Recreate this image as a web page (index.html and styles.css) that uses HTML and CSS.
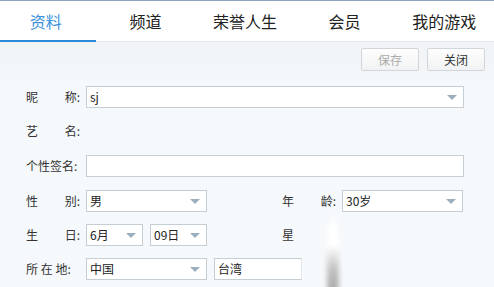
FILE: index.html
```html
<!DOCTYPE html>
<html lang="zh-CN">
<head>
<meta charset="utf-8">
<title>资料</title>
<link rel="stylesheet" href="styles.css">
</head>
<body>
<div class="page">
  <div class="topline"></div>
  <nav class="tabs">
    <div class="tab active">资料</div>
    <div class="tab">频道</div>
    <div class="tab">荣誉人生</div>
    <div class="tab">会员</div>
    <div class="tab">我的游戏</div>
  </nav>
  <div class="toolbar">
    <button class="btn disabled">保存</button>
    <button class="btn">关闭</button>
  </div>
  <div class="form">
    <div class="row r1">
      <div class="label"><span>昵</span><span>称:</span></div>
      <div class="field select wide"><span>sj</span><i class="arrow"></i></div>
    </div>
    <div class="row r2">
      <div class="label"><span>艺</span><span>名:</span></div>
    </div>
    <div class="row r3">
      <div class="label"><span>个性签名:</span></div>
      <div class="field wide"></div>
    </div>
    <div class="row r4">
      <div class="label"><span>性</span><span>别:</span></div>
      <div class="field select mid"><span>男</span><i class="arrow"></i></div>
      <div class="label second"><span>年</span><span>龄:</span></div>
      <div class="field select mid"><span>30岁</span><i class="arrow"></i></div>
    </div>
    <div class="row r5">
      <div class="label"><span>生</span><span>日:</span></div>
      <div class="field select small"><span>6月</span><i class="arrow"></i></div>
      <div class="field select small gap"><span>09日</span><i class="arrow"></i></div>
      <div class="label second"><span>星</span></div>
    </div>
    <div class="row r6">
      <div class="label"><span>所 在 地:</span></div>
      <div class="field select mid"><span>中国</span><i class="arrow"></i></div>
      <div class="field city gap"><span>台湾</span></div>
    </div>
  </div>
  <div class="blur"></div>
</div>
</body>
</html>
```

FILE: styles.css
```css
html, body {
  margin: 0;
  padding: 0;
}
body {
  width: 494px;
  height: 287px;
  overflow: hidden;
  background: #f6f9fc;
  font-family: "Noto Sans CJK SC", "Noto Sans", sans-serif;
  color: #333;
}
.page {
  position: relative;
  width: 494px;
  height: 287px;
  overflow: hidden;
}
.topline {
  height: 1px;
  background: #8ea4c2;
}
.tabs {
  display: flex;
  gap: 4px;
  height: 40px;
  background: #fff;
  border-bottom: 1px solid #e3e6ea;
}
.tab {
  width: 96px;
  box-sizing: border-box;
  padding-right: 4px;
  text-align: center;
  font-size: 16px;
  line-height: 40px;
  color: #222;
}
.tab.active {
  color: #3d90dc;
  height: 41px;
  box-sizing: border-box;
  border-bottom: 2px solid #2b8bdb;
  margin-bottom: -1px;
  line-height: 40px;
}
.toolbar {
  display: flex;
  justify-content: flex-end;
  gap: 8px;
  padding: 6px 9px 0 0;
  height: 38px;
  box-sizing: border-box;
  background: linear-gradient(#f1f4f7, #f4f7fa);
}
.btn {
  width: 58px;
  height: 23px;
  padding: 0;
  border: 1px solid #d2d6da;
  border-radius: 2px;
  background: linear-gradient(#fefefe, #f1f2f3);
  font-family: "Noto Sans CJK SC", sans-serif;
  font-size: 12px;
  line-height: 20px;
  color: #333;
}
.btn.disabled {
  color: #ababab;
}
.form {
  padding: 6px 0 0 26px;
}
.row {
  display: flex;
  align-items: center;
  height: 22px;
  font-size: 12px;
}
.r2 { margin-top: 12px; }
.r3 { margin-top: 13px; }
.r4 { margin-top: 13px; }
.r5, .r6 { margin-top: 12px; }
.label {
  width: 54px;
  margin-right: 6px;
  display: flex;
  justify-content: space-between;
  line-height: 22px;
  white-space: nowrap;
}
.label.second {
  margin-left: 75px;
}
.field {
  height: 22px;
  box-sizing: border-box;
  border: 1px solid #c6ced5;
  background: #fff;
  display: flex;
  align-items: center;
  justify-content: space-between;
  padding: 0 6px 0 3px;
  font-size: 12px;
  color: #222;
}
.field span {
  line-height: 20px;
}
.wide { width: 378px; }
.mid { width: 121px; }
.small { width: 57px; }
.gap { margin-left: 7px; }
.city {
  width: 88px;
  border-right-color: #e4e8ec;
}
.arrow {
  width: 0;
  height: 0;
  border-left: 5px solid transparent;
  border-right: 5px solid transparent;
  border-top: 5px solid #9cafbf;
  margin-top: 1px;
}
.blur {
  position: absolute;
  left: 327px;
  top: 214px;
  width: 12px;
  height: 90px;
  border-radius: 50% 50% 30% 30%;
  background: linear-gradient(#f6f9fc 0%, #ffffff 15%, #ffffff 35%, #c4c4c4 60%, #9a9a9a 100%);
  filter: blur(2.5px);
}
```
